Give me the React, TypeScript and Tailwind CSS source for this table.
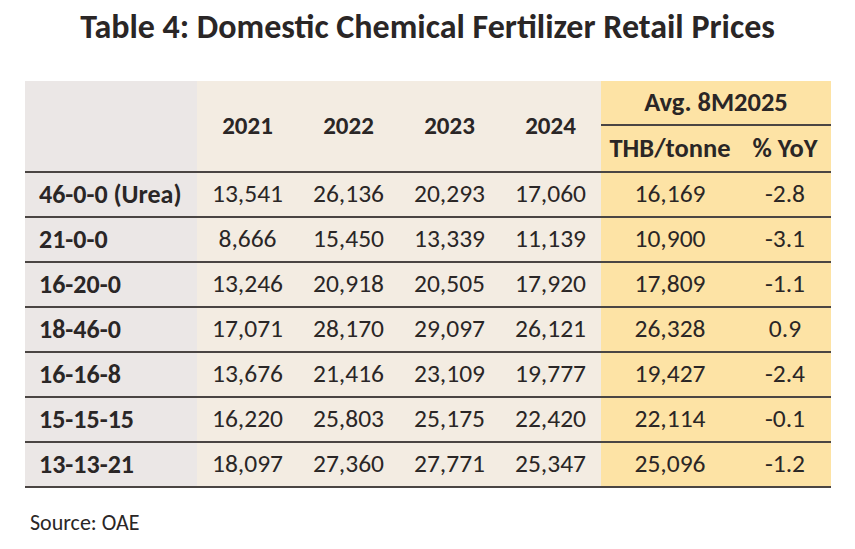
import React from "react";

const rows: [string, string, string, string, string, string, string][] = [
  ["46-0-0 (Urea)", "13,541", "26,136", "20,293", "17,060", "16,169", "-2.8"],
  ["21-0-0", "8,666", "15,450", "13,339", "11,139", "10,900", "-3.1"],
  ["16-20-0", "13,246", "20,918", "20,505", "17,920", "17,809", "-1.1"],
  ["18-46-0", "17,071", "28,170", "29,097", "26,121", "26,328", "0.9"],
  ["16-16-8", "13,676", "21,416", "23,109", "19,777", "19,427", "-2.4"],
  ["15-15-15", "16,220", "25,803", "25,175", "22,420", "22,114", "-0.1"],
  ["13-13-21", "18,097", "27,360", "27,771", "25,347", "25,096", "-1.2"],
];

const cols = "grid grid-cols-[172px_101px_101px_101px_101px_138px_92px]";

export default function App() {
  return (
    <div className="w-[855px] h-[549px] bg-white font-['Carlito','Lato',sans-serif] text-[#2a2626] overflow-hidden">
      <h1 className="text-center text-[34px] font-bold leading-[40px] pt-[7px]">
        Table 4: Domestic Chemical Fertilizer Retail Prices
      </h1>
      <div className="ml-[25px] mt-[34px] w-[806px]">
        <div className={`${cols} grid-rows-[45px_45px] border-b-2 border-[#4a4543] text-[25px] font-bold`}>
          <div className="row-span-2 bg-[#ebe7e6]" />
          {["2021", "2022", "2023", "2024"].map((y) => (
            <div key={y} className="row-span-2 bg-[#f3ece2] flex items-center justify-center">
              {y}
            </div>
          ))}
          <div className="col-span-2 bg-[#fde3a5] flex items-center justify-center border-b-2 border-[#4a4543] text-[26.5px]">
            Avg. 8M2025
          </div>
          <div className="bg-[#fde3a5] flex items-center justify-center text-[26.5px]">THB/tonne</div>
          <div className="bg-[#fde3a5] flex items-center justify-center text-[26.5px]">% YoY</div>
        </div>
        {rows.map((r) => (
          <div key={r[0]} className={`${cols} h-[45px] border-b-2 border-[#4a4543] text-[25.5px]`}>
            <div className="bg-[#ebe7e6] flex items-center pl-[14px] font-bold text-[26px]">{r[0]}</div>
            {r.slice(1, 5).map((v, i) => (
              <div key={i} className="bg-[#f3ece2] flex items-center justify-center">
                {v}
              </div>
            ))}
            <div className="bg-[#fde3a5] flex items-center justify-center">{r[5]}</div>
            <div className="bg-[#fde3a5] flex items-center justify-center">{r[6]}</div>
          </div>
        ))}
      </div>
      <div className="ml-[30px] mt-[23px] text-[22px] leading-[24px]">Source: OAE</div>
    </div>
  );
}
